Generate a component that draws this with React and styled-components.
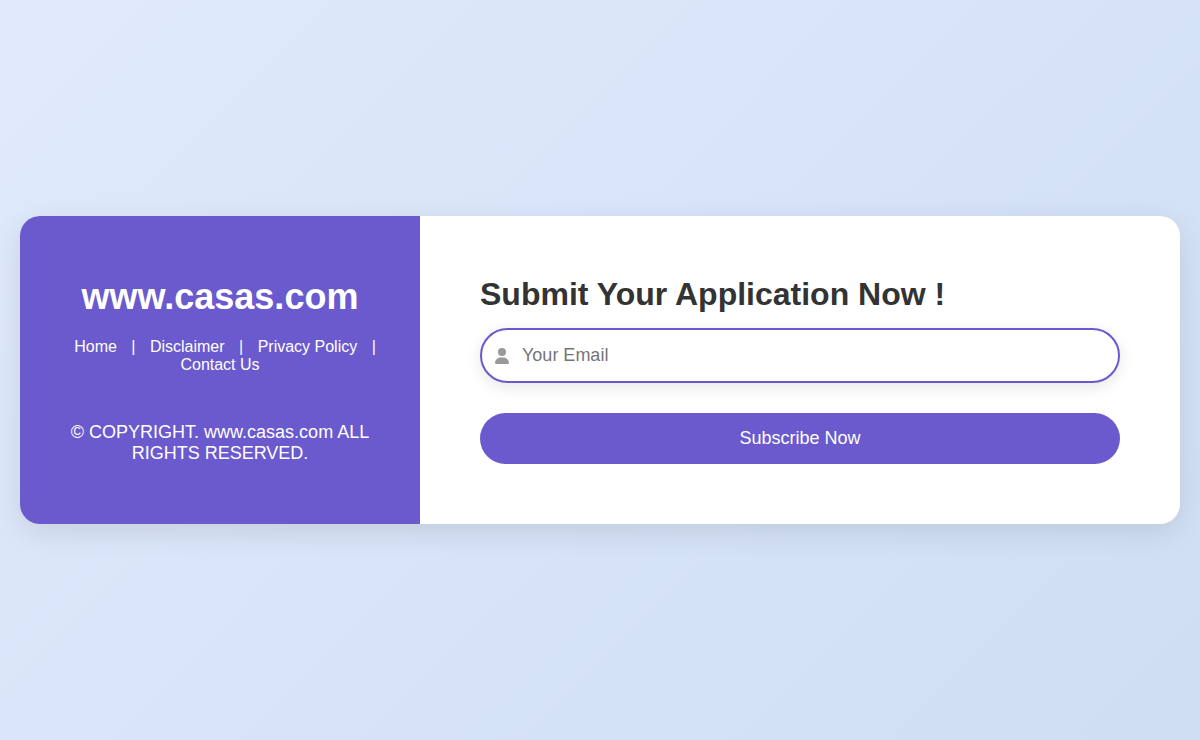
import React, { useState } from 'react'
import styled, { createGlobalStyle } from 'styled-components'
import { FaUser } from 'react-icons/fa6'

const GlobalStyle = createGlobalStyle`
  * {
    box-sizing: border-box;
    margin: 0;
    padding: 0;
  }

  body {
    font-family: Arial, "Liberation Sans", sans-serif;
  }
`

const Page = styled.main`
  min-height: 100vh;
  display: flex;
  justify-content: center;
  align-items: center;
  padding: 20px;
  background: linear-gradient(135deg, #e0eafc, #cfdef3);
`

const Card = styled.section`
  width: 100%;
  max-width: 1200px;
  display: flex;
  overflow: hidden;
  border-radius: 20px;
  background: #fff;
  box-shadow: 0 8px 30px rgba(0, 0, 0, 0.1);
`

const Side = styled.div`
  flex: 0 0 400px;
  display: flex;
  flex-direction: column;
  justify-content: center;
  padding: 60px 40px;
  background: #6a5acd;
  color: #fff;
  text-align: center;

  h1 {
    font-size: 36px;
    margin-bottom: 20px;
  }
`

const Nav = styled.nav`
  margin-bottom: 48px;
  font-size: 16px;
  line-height: 18px;
`

const NavLink = styled.a`
  margin: 0 10px;
  color: #fff;
  text-decoration: none;
  &:hover {
    text-decoration: underline;
  }
`

const Copyright = styled.p`
  font-size: 18px;
`

const Form = styled.form`
  flex: 1;
  display: flex;
  flex-direction: column;
  justify-content: center;
  padding: 60px;

  h2 {
    font-size: 32px;
    line-height: 36px;
    margin-bottom: 16px;
    color: #333;
  }
`

const Field = styled.label`
  display: flex;
  align-items: center;
  margin-bottom: 30px;
  padding-left: 13px;
  border: 2px solid #6a5acd;
  border-radius: 30px;
  background: #fff;
  box-shadow: 0 4px 15px rgba(0, 0, 0, 0.1);

  svg {
    flex-shrink: 0;
    width: 14px;
    height: 16px;
    color: #999;
  }
`

const EmailInput = styled.input`
  flex: 1;
  min-width: 0;
  padding: 15px 20px 15px 13px;
  border: none;
  outline: none;
  background: transparent;
  font-family: inherit;
  font-size: 18px;
`

const Submit = styled.button`
  padding: 15px;
  border: none;
  border-radius: 30px;
  background: #6a5acd;
  color: #fff;
  font-family: inherit;
  font-size: 18px;
  cursor: pointer;
  &:hover {
    background: #5a4abf;
  }
`

const links = ['Home', 'Disclaimer', 'Privacy Policy', 'Contact Us']

export default function App() {
  const [email, setEmail] = useState('')

  return (
    <>
      <GlobalStyle />
      <Page>
        <Card>
          <Side>
            <h1>www.casas.com</h1>
            <Nav>
              {links.map((link, i) => (
                <React.Fragment key={link}>
                  {i > 0 && ' | '}
                  <NavLink href="#">{link}</NavLink>
                </React.Fragment>
              ))}
            </Nav>
            <Copyright>© COPYRIGHT. www.casas.com ALL RIGHTS RESERVED.</Copyright>
          </Side>
          <Form onSubmit={e => e.preventDefault()}>
            <h2>Submit Your Application Now !</h2>
            <Field>
              <FaUser />
              <EmailInput
                type="email"
                aria-label="Your Email"
                placeholder="Your Email"
                value={email}
                onChange={e => setEmail(e.target.value)}
              />
            </Field>
            <Submit type="submit">Subscribe Now</Submit>
          </Form>
        </Card>
      </Page>
    </>
  )
}
